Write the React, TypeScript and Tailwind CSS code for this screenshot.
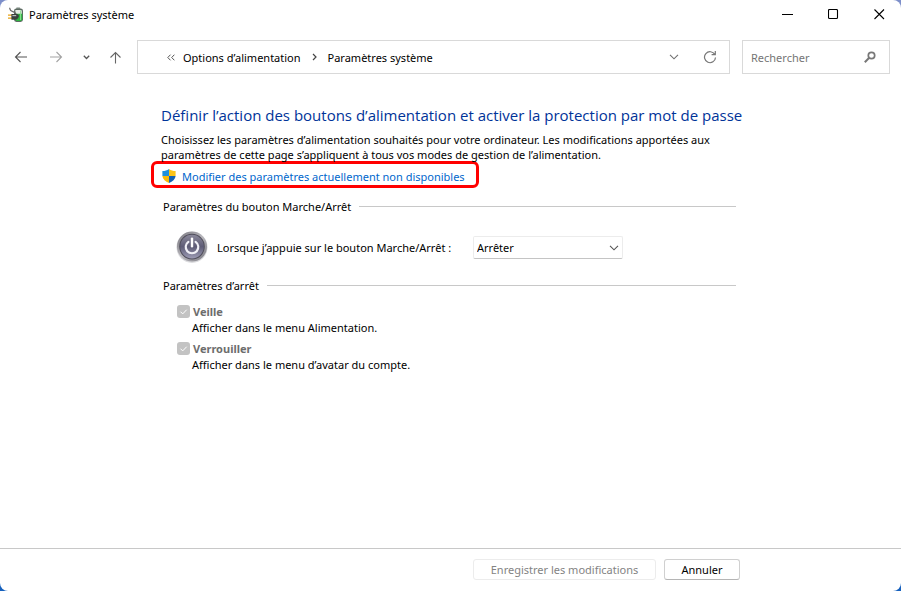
import { useState } from "react";
import type { ReactNode } from "react";

const shutdownOptions = [
    { id: "sleep", label: "Veille", description: "Afficher dans le menu Alimentation." },
    { id: "lock", label: "Verrouiller", description: "Afficher dans le menu d’avatar du compte." },
];

function PowerOptionsIcon() {
    return (
        <svg viewBox="0 0 16 16" className="w-4 h-4 shrink-0">
            <rect x="6" y="1.4" width="9" height="13.6" rx="2.4" fill="#5c6b62" />
            <rect x="8.2" y=".4" width="4" height="1.6" rx=".6" fill="#77847c" />
            <path d="M7.4 3h5.8l.6 1v3H7.4z" fill="#e6ece6" />
            <path d="M7.4 6.8h6.8v5.6l-1 1.600H8.4l-1-1.2z" fill="#2fb542" />
            <path d="M12.6 3.4v9.6" stroke="#8fe096" strokeWidth="1" />
            <path d="M1.6.8c.2 2 1.400 3.400 3.200 3.800 1.800.4 3 1.400 3.200 3" fill="none" stroke="#6b6b6b" strokeWidth="1.2" />
            <path d="M0 8.100h4M0 11.100h4" stroke="#e8a317" strokeWidth="1.400" />
            <path d="M3.400 7h3c1.800-.6 4 .2 4.600 1.800-.2 2.400-2.200 4.400-4.600 4H3.400z" fill="#3a403e" />
            <path d="M4.400 8.600h3.800" stroke="#b8bfbc" strokeWidth="1.200" />
        </svg>
    );
}

function ShieldIcon() {
    return (
        <svg viewBox="0 0 14 14" className="w-[14px] h-[14px] shrink-0">
            <path d="M7 0C5 1.4 3 2 .4 2v5H7z" fill="#1d8fe0" />
            <path d="M7 0c2 1.4 4 2 6.6 2v5H7z" fill="#fcc419" />
            <path d="M.4 7C.8 10.3 3.4 12.7 7 14V7z" fill="#f9b90c" />
            <path d="M13.6 7c-.4 3.3-3 5.7-6.6 7V7z" fill="#1261b5" />
        </svg>
    );
}

function PowerButtonIcon() {
    return (
        <svg viewBox="0 0 32 32" className="w-8 h-8 shrink-0">
            <defs>
                <linearGradient id="ring" x1="0" y1="0" x2="1" y2="1">
                    <stop offset="0" stopColor="#77757d" />
                    <stop offset=".5" stopColor="#b9b8bd" />
                    <stop offset="1" stopColor="#77767e" />
                </linearGradient>
                <linearGradient id="face" x1="0" y1="0" x2="0" y2="1">
                    <stop offset="0" stopColor="#8a889a" />
                    <stop offset=".5" stopColor="#5e5c76" />
                    <stop offset="1" stopColor="#9c9bb4" />
                </linearGradient>
            </defs>
            <circle cx="16" cy="16.3" r="15.6" fill="#dcdcdf" />
            <circle cx="16" cy="15.6" r="15" fill="url(#ring)" />
            <circle cx="16" cy="15.6" r="12.8" fill="#504e5b" />
            <circle cx="16" cy="15.6" r="11.8" fill="url(#face)" />
            <path d="M12.4 10.8a6.3 6.3 0 1 0 7.2 0" fill="none" stroke="#f0f0f6" strokeWidth="2.2" strokeLinecap="round" />
            <path d="M16 7.6v7.6" stroke="#fff" strokeWidth="2.4" strokeLinecap="round" />
        </svg>
    );
}

function ChevronDown({ className }: { className: string }) {
    return (
        <svg viewBox="0 0 10 6" fill="none" stroke="currentColor" className={className}>
            <path d="M1 .8l4 4 4-4" strokeWidth="1.1" />
        </svg>
    );
}

function GroupHeading({ children }: { children: ReactNode }) {
    return (
        <div className="flex items-center gap-2 pl-[2px]">
            <h2>{children}</h2>
            <div className="flex-1 h-px bg-[#c8c8c8]" />
        </div>
    );
}

export default function App() {
    const [action, setAction] = useState("Arrêter");

    return (
        <div className="min-h-screen flex bg-linear-to-b from-[#7d8fca] to-[#1560bd]">
            <div className="flex-1 min-w-0 flex flex-col bg-white rounded-lg font-['Noto_Sans','Open_Sans',sans-serif] text-[11px] leading-[15px] text-black">
                {/* Title bar */}
                <header className="flex items-center h-[29px] pl-2 pr-4">
                    <PowerOptionsIcon />
                    <span className="ml-[5px]">Paramètres système</span>
                    <div className="ml-auto flex items-center gap-[35px]">
                        <button aria-label="Réduire">
                            <svg viewBox="0 0 11 11" className="w-[11px] h-[11px]" stroke="#000" shapeRendering="crispEdges">
                                <path d="M0 5.5h11" />
                            </svg>
                        </button>
                        <button aria-label="Agrandir">
                            <svg viewBox="0 0 11 11" className="w-[11px] h-[11px]" fill="none" stroke="#000">
                                <rect x=".5" y=".5" width="9" height="9" rx="1" strokeWidth="1.1" />
                            </svg>
                        </button>
                        <button aria-label="Fermer">
                            <svg viewBox="0 0 11 11" className="w-[11px] h-[11px]" stroke="#000" strokeWidth="1.1">
                                <path d="M.5.5l9.5 9.5M10 .5L.5 10" />
                            </svg>
                        </button>
                    </div>
                </header>

                {/* Navigation */}
                <nav className="flex items-center pt-[11px] pl-[14px] pr-[11px]">
                    <button aria-label="Précédent" className="text-[#555]">
                        <svg viewBox="0 0 14 12" className="w-[14px] h-3" fill="none" stroke="currentColor" strokeWidth="1.1">
                            <path d="M13 6H1.5M6.5 1l-5 5 5 5" />
                        </svg>
                    </button>
                    <button aria-label="Suivant" className="ml-[21px] text-[#a3a3a3]">
                        <svg viewBox="0 0 14 12" className="w-[14px] h-3" fill="none" stroke="currentColor" strokeWidth="1.1">
                            <path d="M1 6h11.5M7.5 1l5 5-5 5" />
                        </svg>
                    </button>
                    <button aria-label="Emplacements récents" className="ml-5 text-[#555]">
                        <svg viewBox="0 0 7 5" className="w-[7px] h-[5px]" fill="none" stroke="currentColor" strokeWidth="1.3">
                            <path d="M.8.8l2.7 2.7L6.2.8" />
                        </svg>
                    </button>
                    <button aria-label="Dossier parent" className="ml-5 text-[#666]">
                        <svg viewBox="0 0 12 13" className="w-3 h-[13px]" fill="none" stroke="currentColor" strokeWidth="1.1">
                            <path d="M5.5 12.5V1.5M.5 6.5l5-5 5 5" />
                        </svg>
                    </button>
                    <div className="ml-[15px] flex-1 flex items-center h-[34px] border border-[#d9d9d9] pl-[29px] pr-3">
                        <svg viewBox="0 0 8 7" className="w-2 h-[7px] text-[#555]" fill="none" stroke="currentColor">
                            <path d="M3.5.7L.8 3.5l2.7 2.8M7.4.7L4.7 3.5l2.7 2.8" />
                        </svg>
                        <a href="#options" className="ml-2">Options d’alimentation</a>
                        <svg viewBox="0 0 5 8" className="w-[5px] h-2 mx-[11px] text-[#444]" fill="none" stroke="currentColor" strokeWidth="1.2">
                            <path d="M1 1l3 3-3 3" />
                        </svg>
                        <a href="#systeme">Paramètres système</a>
                        <button aria-label="Historique" className="ml-auto text-[#707070]">
                            <ChevronDown className="w-[10px] h-[6px]" />
                        </button>
                        <button aria-label="Actualiser" className="ml-6 text-[#777]">
                            <svg viewBox="0 0 14 14" className="w-[14px] h-[14px]" fill="none" stroke="currentColor" strokeWidth="1.2">
                                <path d="M11.8 4.5A5.5 5.5 0 1 0 12.5 7.5M12.3 1v3.7H8.6" />
                            </svg>
                        </button>
                    </div>
                    <div className="ml-3 flex items-center w-[148px] h-[34px] border border-[#d9d9d9] pl-2 pr-[13px]">
                        <input
                            type="text"
                            aria-label="Rechercher"
                            placeholder="Rechercher"
                            className="flex-1 min-w-0 outline-none placeholder:text-[#757575]"
                        />
                        <svg viewBox="0 0 12 12" className="w-3 h-3 text-[#777]" fill="none" stroke="currentColor">
                            <circle cx="7.5" cy="4.5" r="3.2" strokeWidth="1.7" />
                            <path d="M5.2 6.8L.8 11.2" strokeWidth="2" />
                        </svg>
                    </div>
                </nav>

                <main className="flex-1 pl-[151px] pr-[165px] pt-[29px]">
                    <div className="pl-[10px]">
                        <h1 className="font-['Open_Sans','Noto_Sans',sans-serif] text-[15px] leading-6 text-[#003399] whitespace-nowrap">
                            Définir l’action des boutons d’alimentation et activer la protection par mot de passe
                        </h1>
                        <p className="mt-[5px] whitespace-nowrap">
                            Choisissez les paramètres d’alimentation souhaités pour votre ordinateur. Les modifications apportées aux
                            <br />
                            paramètres de cette page s’appliquent à tous vos modes de gestion de l’alimentation.
                        </p>
                    </div>

                    <a
                        href="#modifier"
                        className="flex w-fit items-center gap-[6px] h-[27px] -mt-px pt-[3px] pl-2 pr-[11px] border-3 border-[#ff0000] rounded-md text-[#0066cc] whitespace-nowrap"
                    >
                        <ShieldIcon />
                        Modifier des paramètres actuellement non disponibles
                    </a>

                    <section className="pl-[10px] mt-[11px]">
                        <GroupHeading>Paramètres du bouton Marche/Arrêt</GroupHeading>
                        <div className="flex items-center mt-[17px] pl-[15px]">
                            <PowerButtonIcon />
                            <label htmlFor="power-action" className="ml-[9px] w-[256px] whitespace-nowrap">
                                Lorsque j’appuie sur le bouton Marche/Arrêt :
                            </label>
                            <div className="relative">
                                <select
                                    id="power-action"
                                    value={action}
                                    onChange={e => setAction(e.target.value)}
                                    className="block w-[150px] h-[23px] appearance-none border border-[#ececec] border-b-[#c4c4c4] rounded-xs pl-[3px] pr-5 bg-white"
                                >
                                    <option>Arrêter</option>
                                    <option>Ne rien faire</option>
                                    <option>Veille</option>
                                </select>
                                <ChevronDown className="absolute right-1 top-[9px] w-[10px] h-[6px] text-[#555] pointer-events-none" />
                            </div>
                        </div>
                    </section>

                    <section className="pl-[10px] mt-[15px]">
                        <GroupHeading>Paramètres d’arrêt</GroupHeading>
                        <div className="mt-[10px] pl-4 flex flex-col gap-1">
                            {shutdownOptions.map(option => (
                                <div key={option.id}>
                                    <div className="flex items-center gap-[3px] h-4">
                                        <div className="relative">
                                            <input
                                                id={option.id}
                                                type="checkbox"
                                                defaultChecked
                                                disabled
                                                className="block appearance-none w-[13px] h-[13px] rounded-[3px] bg-[#c3c3c3]"
                                            />
                                            <svg viewBox="0 0 13 13" className="absolute inset-0 pointer-events-none" fill="none" stroke="#fff">
                                                <path d="M3.5 6.7l2.2 2.2 4-4.2" />
                                            </svg>
                                        </div>
                                        <label htmlFor={option.id} className="font-bold text-[#6d6d6d]">{option.label}</label>
                                    </div>
                                    <p className="pl-[15px] mt-px leading-4">{option.description}</p>
                                </div>
                            ))}
                        </div>
                    </section>
                </main>

                {/* Footer actions */}
                <footer className="flex justify-end gap-2 border-t border-[#c8c8c8] pt-[10px] pb-[11px] pr-[161px]">
                    <button disabled className="w-[183px] h-[21px] border border-[#ececec] rounded-[3px] text-[#838383] whitespace-nowrap">
                        Enregistrer les modifications
                    </button>
                    <button className="w-[76px] h-[21px] border border-[#d0d0d0] border-b-[#b5b5b5] rounded-[3px]">Annuler</button>
                </footer>
            </div>
        </div>
    );
}
